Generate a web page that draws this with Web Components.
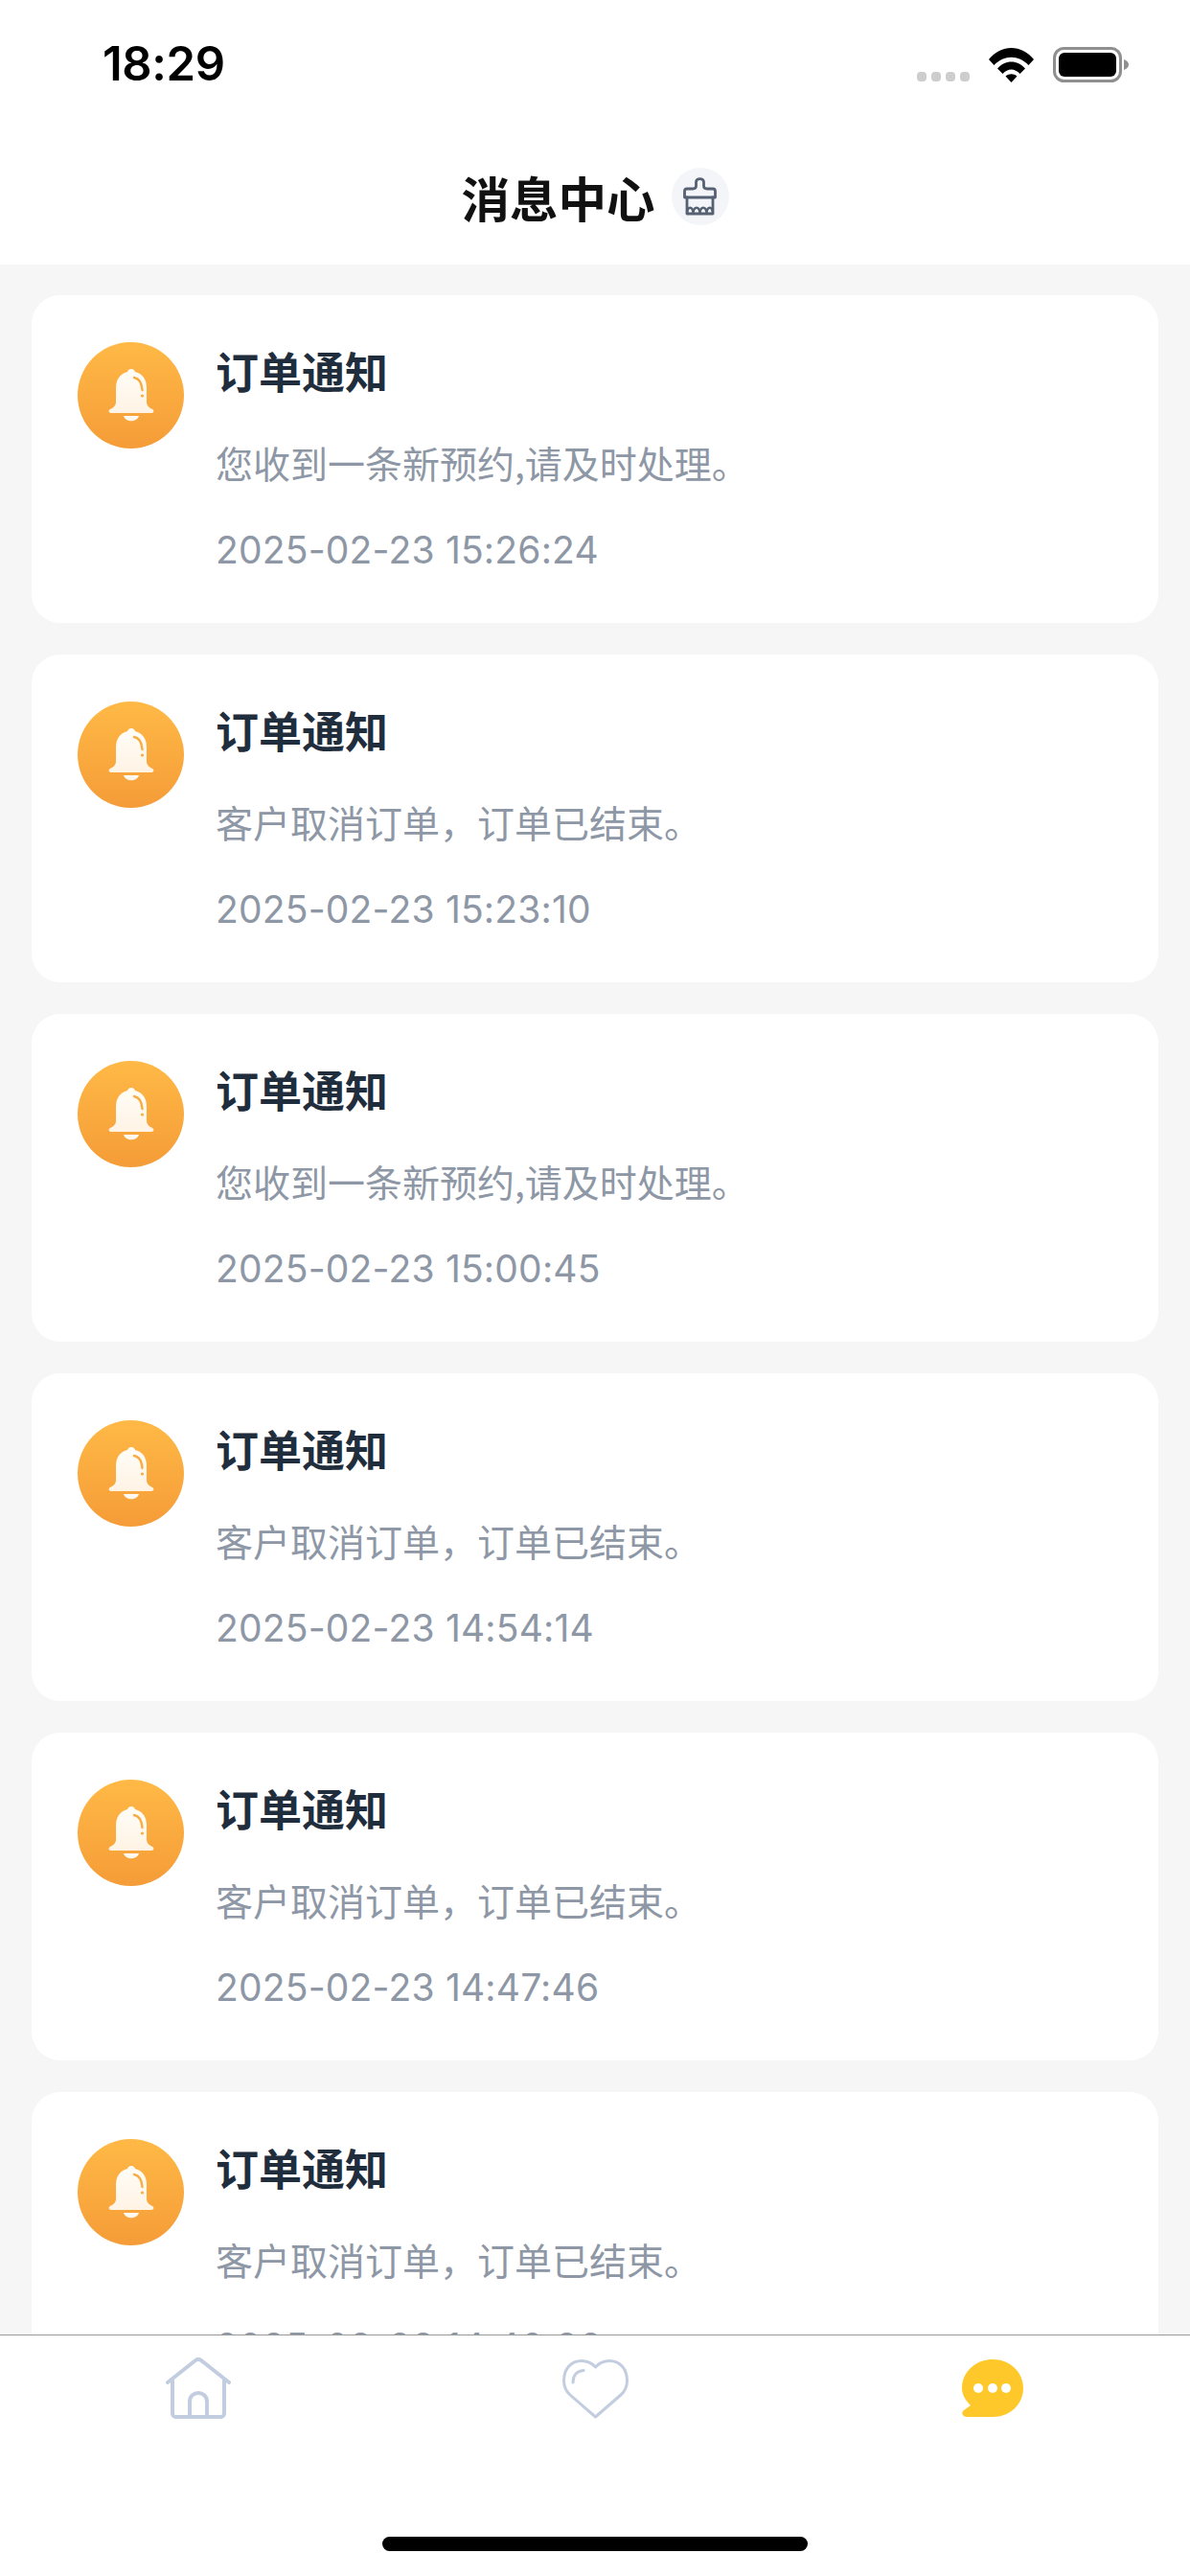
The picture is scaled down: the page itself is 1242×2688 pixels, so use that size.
<!DOCTYPE html>
<html lang="zh">
<head>
<meta charset="utf-8">
<title>消息中心</title>
<style>
  html, body { margin: 0; padding: 0; background: #fff; }
  body { font-family: "Inter", "Noto Sans CJK SC", sans-serif; }
</style>
</head>
<body>
<app-shell>
  <status-bar slot="top" time="18:29"></status-bar>
  <nav-header slot="top">消息中心</nav-header>
  <message-card>
    <span slot="title">订单通知</span>
    <span slot="body">您收到一条新预约,请及时处理。</span>
    <span slot="time">2025-02-23 15:26:24</span>
  </message-card>
  <message-card>
    <span slot="title">订单通知</span>
    <span slot="body">客户取消订单，订单已结束。</span>
    <span slot="time">2025-02-23 15:23:10</span>
  </message-card>
  <message-card>
    <span slot="title">订单通知</span>
    <span slot="body">您收到一条新预约,请及时处理。</span>
    <span slot="time">2025-02-23 15:00:45</span>
  </message-card>
  <message-card>
    <span slot="title">订单通知</span>
    <span slot="body">客户取消订单，订单已结束。</span>
    <span slot="time">2025-02-23 14:54:14</span>
  </message-card>
  <message-card>
    <span slot="title">订单通知</span>
    <span slot="body">客户取消订单，订单已结束。</span>
    <span slot="time">2025-02-23 14:47:46</span>
  </message-card>
  <message-card>
    <span slot="title">订单通知</span>
    <span slot="body">客户取消订单，订单已结束。</span>
    <span slot="time">2025-02-23 14:40:36</span>
  </message-card>
  <tab-bar slot="bottom"></tab-bar>
</app-shell>

<script>
const $shell = document.createElement("template");
$shell.innerHTML = /*html */ `
  <style>
    :host {
      display: flex;
      flex-direction: column;
      width: 1242px;
      height: 2688px;
      overflow: hidden;
      background: #fff;
    }
    .list {
      flex: 1;
      min-height: 0;
      overflow: hidden;
      background: #f6f6f6;
      padding: 32px 33px 0;
      display: flex;
      flex-direction: column;
      gap: 33px;
    }
    ::slotted(message-card) { flex: none; }
  </style>
  <slot name="top"></slot>
  <div class="list"><slot></slot></div>
  <slot name="bottom"></slot>
`;

const $status = document.createElement("template");
$status.innerHTML = /*html */ `
  <style>
    :host {
      display: flex;
      align-items: flex-start;
      justify-content: space-between;
      height: 100px;
      padding: 0 64px 0 107px;
      background: #fff;
      color: #000;
    }
    .time {
      font: 600 49px/56px "Inter", sans-serif;
      margin-top: 39px;
      letter-spacing: -0.4px;
    }
    .icons {
      display: flex;
      align-items: flex-end;
      margin-top: 49px;
    }
    .dots { display: flex; gap: 5px; margin: 0 20px 1px 0; }
    .dots i { width: 10px; height: 10px; border-radius: 4px; background: #cdcdcd; }
    svg { display: block; }
    .wifi { margin-right: 20px; }
  </style>
  <div class="time"></div>
  <div class="icons">
    <div class="dots"><i></i><i></i><i></i><i></i></div>
    <svg class="wifi" width="47" height="36" viewBox="0 0 47 36">
      <path d="M0 12 C13 -4 34 -4 47 12 L41.500 18 C31 7 16 7 5.500 18 Z" fill="#000"/>
      <path d="M9 21.500 C17 12 30 12 38 21.500 L32.500 27 C27 21 20 21 14.500 27 Z" fill="#000"/>
      <path d="M17.500 29.500 C21 26.500 26 26.500 29.500 29.500 L23.500 36 Z" fill="#000"/>
    </svg>
    <svg width="79" height="37" viewBox="0 0 79 37">
      <rect x="1.500" y="1.500" width="69" height="34" rx="10" fill="none" stroke="#8f8f8f" stroke-width="3"/>
      <rect x="6" y="6" width="60" height="25" rx="6" fill="#000"/>
      <path d="M74 13 C77 14 79 16 79 18.500 C79 21 77 23 74 24 Z" fill="#8f8f8f"/>
    </svg>
  </div>
`;

const $header = document.createElement("template");
$header.innerHTML = /*html */ `
  <style>
    :host {
      display: flex;
      align-items: center;
      justify-content: center;
      gap: 17px;
      height: 176px;
      padding-top: 34px;
      box-sizing: border-box;
      background: #fff;
    }
    .title {
      font: 600 50.500px/60px "Noto Sans CJK SC", sans-serif;
      color: #111;
    }
    .clean {
      width: 60px;
      height: 60px;
      border-radius: 50%;
      background: #f3f5f8;
      display: flex;
      align-items: center;
      justify-content: center;
    }
    svg { display: block; }
  </style>
  <div class="title"><slot></slot></div>
  <div class="clean">
    <svg width="35" height="40" viewBox="0 0 35 40" fill="none" stroke="#566173" stroke-width="2.800" stroke-linejoin="round" stroke-linecap="round">
      <path d="M13.500 9 V5 C13.500 0.500 21.500 0.500 21.500 5 V9 C21.500 11 23 12 25 12 H31 C32.500 12 33.500 13 33.500 14.500 V21 H1.500 V14.500 C1.500 13 2.500 12 4 12 H10 C12 12 13.500 11 13.500 9 Z"/>
      <path d="M4 21 V38 H31 V21"/>
      <path d="M4 37 C5 30 9.500 30 10.500 37 C11.500 30 16.500 30 17.500 37 C18.500 30 23.500 30 24.500 37 C25.500 30 30 30 31 37" stroke-width="2.400"/>
    </svg>
  </div>
`;

const $card = document.createElement("template");
$card.innerHTML = /*html */ `
  <style>
    :host {
      display: flex;
      gap: 34px;
      height: 342px;
      box-sizing: border-box;
      padding: 49px 48px 0;
      background: #fff;
      border-radius: 30px;
    }
    .badge {
      flex: none;
      width: 111px;
      height: 111px;
      border-radius: 50%;
      background: linear-gradient(180deg, #ffb946, #f59c38);
      display: flex;
      align-items: center;
      justify-content: center;
    }
    svg { display: block; }
    .text { display: flex; flex-direction: column; margin-left: -1px; }
    .title {
      font: 600 45px/60px "Noto Sans CJK SC", sans-serif;
      color: #1f2d3d;
    }
    .body {
      font: 400 39px/60px "Noto Sans CJK SC", sans-serif;
      color: #8e97a5;
      margin-top: 35px;
    }
    .time {
      font: 400 39px/60px "Inter", sans-serif;
      letter-spacing: 0.2px;
      color: #8e97a5;
      margin-top: 32px;
    }
  </style>
  <div class="badge">
    <svg width="48" height="56" viewBox="0 0 48 56">
      <defs>
        <linearGradient id="b" x1="0" y1="0" x2="0" y2="1">
          <stop offset="0" stop-color="#fffdf8"/>
          <stop offset="1" stop-color="#fff3e4"/>
        </linearGradient>
      </defs>
      <path d="M24 0 C26.500 0 27.500 1.500 28 3 C36 5 40 11 40 20 V34 C40 38 42 40 46 42 C48 43 48 46 45 46 H3 C0 46 0 43 2 42 C6 40 8 38 8 34 V20 C8 11 12 5 20 3 C20.500 1.500 21.500 0 24 0 Z" fill="url(#b)"/>
      <path d="M16 49 H32 C30 56 18 56 16 49 Z" fill="url(#b)"/>
      <path d="M27 9 C32 10 35 15 35.500 22" fill="none" stroke="#f9ac42" stroke-width="2.400" stroke-linecap="round"/>
      <circle cx="35.500" cy="28" r="1.600" fill="#f9ac42"/>
    </svg>
  </div>
  <div class="text">
    <div class="title"><slot name="title"></slot></div>
    <div class="body"><slot name="body"></slot></div>
    <div class="time"><slot name="time"></slot></div>
  </div>
`;

const $tabs = document.createElement("template");
$tabs.innerHTML = /*html */ `
  <style>
    :host {
      display: flex;
      flex-direction: column;
      align-items: center;
      height: 252px;
      box-sizing: border-box;
      border-top: 1px solid #999;
      background: #fff;
    }
    .tabs {
      width: 100%;
      display: grid;
      grid-template-columns: repeat(3, 1fr);
      padding-top: 23px;
      height: 64px;
    }
    .tab { display: flex; justify-content: center; }
    .tab.mid { padding-top: 2px; }
    .tab.chat { padding-top: 2px; }
    svg { display: block; }
    .home-bar {
      width: 444px;
      height: 15px;
      border-radius: 8px;
      background: #000;
      margin-top: 123px;
    }
  </style>
  <div class="tabs">
    <div class="tab">
      <svg width="68" height="64" viewBox="0 0 68 64" fill="none" stroke="#c3cde0" stroke-width="4" stroke-linecap="round" stroke-linejoin="round">
        <path d="M2 26 L31 3 C33 1.500 35 1.500 37 3 L66 26"/>
        <path d="M7 24 V58 C7 60 8 62 10 62 H58 C60 62 61 60 61 58 V24"/>
        <path d="M25 62 V46 C25 34 43 34 43 46 V62"/>
      </svg>
    </div>
    <div class="tab mid">
      <svg width="69" height="62" viewBox="0 0 69 62" fill="none" stroke="#c3cde0" stroke-width="3" stroke-linecap="round" stroke-linejoin="round">
        <path d="M34.500 8 C30 3 25 1.500 20 1.500 C9 1.500 1.500 10 1.500 22 C1.500 28 3.500 33 8 37 L34.500 60 L61 37 C65.500 33 67.500 28 67.500 22 C67.500 10 60 1.500 49 1.500 C44 1.500 39 3 34.500 8 Z"/>
        <path d="M11 24 C11 17 15 12 22 11.500"/>
      </svg>
    </div>
    <div class="tab chat">
      <svg width="65" height="60" viewBox="0 0 65 60">
        <path d="M33 0 C51 0 65 13 65 30 C65 47 51 60 33 60 H6 C1 60 0 55 3 53 L10 48 C5 43 1 37 1 30 C1 13 15 0 33 0 Z" fill="#fec82b"/>
        <circle cx="18" cy="30" r="5" fill="#fff"/>
        <circle cx="33" cy="30" r="5" fill="#fff"/>
        <circle cx="47" cy="30" r="5" fill="#fff"/>
      </svg>
    </div>
  </div>
  <div class="home-bar"></div>
`;

function makeElement(name, $tpl, init) {
  customElements.define(name, class extends HTMLElement {
    constructor() {
      super();
      this.attachShadow({ mode: "open" });
      this.shadowRoot.appendChild($tpl.content.cloneNode(true));
    }
    connectedCallback() {
      if (init) init(this);
    }
  });
}

makeElement("app-shell", $shell);
makeElement("status-bar", $status, (el) => {
  el.shadowRoot.querySelector(".time").textContent = el.getAttribute("time");
});
makeElement("nav-header", $header);
makeElement("message-card", $card);
makeElement("tab-bar", $tabs);
</script>
</body>
</html>
